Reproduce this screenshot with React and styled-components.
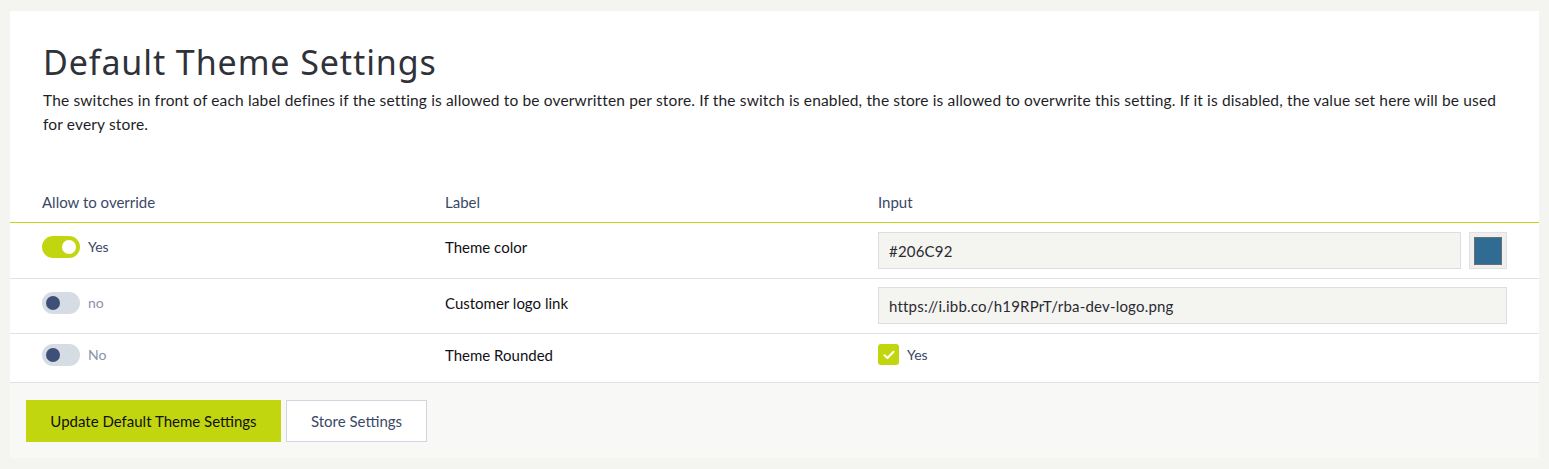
import React from "react";
import styled, { createGlobalStyle } from "styled-components";

const Global = createGlobalStyle`
  html, body { margin: 0; padding: 0; background: #f4f4f0; }
  body { font-family: "Lato", "Noto Sans", sans-serif; color: #1c1c24; }
  * { box-sizing: border-box; }
`;

const Page = styled.div`
  padding: 11px 10px 11px 10px;
`;

const Card = styled.div`
  background: #ffffff;
`;

const Intro = styled.div`
  padding: 31px 32px 56px 33px;
`;

const Title = styled.h1`
  margin: 0 0 6px 0;
  font-family: "Noto Sans", "Lato", sans-serif;
  font-weight: 400;
  font-size: 34px;
  line-height: 40px;
  color: #30323a;
  letter-spacing: 0.9px;
`;

const Desc = styled.p`
  margin: 0;
  font-size: 15.5px;
  line-height: 24px;
  letter-spacing: 0.15px;
  color: #1e1e28;
`;

const Grid = styled.div`
  display: grid;
  grid-template-columns: 435px 433px 1fr;
`;

const HeadCell = styled.div`
  padding: 0 0 10px ${(p) => p.$pl || 0}px;
  font-size: 15px;
  line-height: 20px;
  color: #3a4866;
  border-bottom: 1px solid #c3d512;
`;

const Cell = styled.div`
  display: flex;
  align-items: ${(p) => (p.$top ? "flex-start" : "center")};
  gap: 8px;
  padding: ${(p) => p.$pad || "9px 0"};
  padding-left: ${(p) => p.$pl || 0}px;
  padding-right: ${(p) => p.$pr || 0}px;
  min-height: ${(p) => p.$h || 55}px;
  border-bottom: ${(p) => (p.$last ? "none" : "1px solid #e0e2e8")};
  font-size: 15px;
  color: #111116;
`;

const CellText = styled.span`
  line-height: 20px;
  padding-top: 1px;
`;

const Track = styled.span`
  position: relative;
  display: inline-block;
  width: 38px;
  height: 22px;
  border-radius: 11px;
  background: ${(p) => (p.$on ? "#c2d60f" : "#d6dce4")};
  flex: none;
`;

const Knob = styled.span`
  position: absolute;
  top: 4px;
  left: ${(p) => (p.$on ? "20px" : "4px")};
  width: 14px;
  height: 14px;
  border-radius: 50%;
  background: ${(p) => (p.$on ? "#ffffff" : "#3e5078")};
`;

const SwitchText = styled.span`
  font-size: 14px;
  line-height: 22px;
  color: ${(p) => (p.$on ? "#3a4866" : "#8a93a8")};
`;

const TextInput = styled.div`
  flex: 1;
  height: 37px;
  display: flex;
  align-items: center;
  padding: 0 10px;
  background: #f4f4f0;
  border: 1px solid #dcdee4;
  font-size: 15px;
  letter-spacing: 0.2px;
  color: #2a2a33;
`;

const SwatchBox = styled.div`
  width: 38px;
  height: 37px;
  flex: none;
  background: #efefef;
  border: 1px solid #e0e0e2;
  display: flex;
  align-items: center;
  justify-content: center;
`;

const Swatch = styled.div`
  width: 28px;
  height: 28px;
  background: #2f6b92;
  border: 1px solid #6b6e70;
`;

const Check = styled.span`
  width: 21px;
  height: 21px;
  border-radius: 3px;
  background: #c2d60f;
  display: inline-flex;
  align-items: center;
  justify-content: center;
  flex: none;
`;

const CheckText = styled.span`
  font-size: 14px;
  line-height: 21px;
  color: #3a4866;
`;

const Footer = styled.div`
  display: flex;
  gap: 5px;
  padding: 17px 16px 16px 16px;
  background: #f8f8f6;
  border-top: 1px solid #e0e2e8;
`;

const Button = styled.button`
  height: 42px;
  padding: 0;
  white-space: nowrap;
  font-family: "Lato", "Noto Sans", sans-serif;
  font-size: 15px;
  cursor: pointer;
  background: ${(p) => (p.$primary ? "#c2d60f" : "#ffffff")};
  color: ${(p) => (p.$primary ? "#111111" : "#3a4866")};
  border: 1px solid ${(p) => (p.$primary ? "#c2d60f" : "#d0d6e0")};
  width: ${(p) => p.$w}px;
`;

const Toggle = ({ on, label }) => (
  <>
    <Track $on={on}>
      <Knob $on={on} />
    </Track>
    <SwitchText $on={on}>{label}</SwitchText>
  </>
);

export default function App() {
  return (
    <>
      <Global />
      <Page>
        <Card>
          <Intro>
            <Title>Default Theme Settings</Title>
            <Desc>
              The switches in front of each label defines if the setting is allowed to be overwritten per store. If the switch is enabled, the store is allowed to overwrite this setting. If it is disabled, the value set here will be used for every store.
            </Desc>
          </Intro>
          <Grid>
            <HeadCell $pl={32}>Allow to override</HeadCell>
            <HeadCell>Label</HeadCell>
            <HeadCell>Input</HeadCell>

            <Cell $pl={32} $top $pad="13px 0 0 0">
              <Toggle on label="Yes" />
            </Cell>
            <Cell $top $pad="13px 0 0 0">
              <CellText>Theme color</CellText>
            </Cell>
            <Cell $pr={32}>
              <TextInput>#206C92</TextInput>
              <SwatchBox>
                <Swatch />
              </SwatchBox>
            </Cell>

            <Cell $pl={32} $top $pad="13px 0 0 0">
              <Toggle label="no" />
            </Cell>
            <Cell $top $pad="13px 0 0 0">
              <CellText>Customer logo link</CellText>
            </Cell>
            <Cell $pr={32} $pad="8px 0 9px 0">
              <TextInput>https://i.ibb.co/h19RPrT/rba-dev-logo.png</TextInput>
            </Cell>

            <Cell $pl={32} $last $top $pad="10px 0 0 0" $h={48}>
              <Toggle label="No" />
            </Cell>
            <Cell $last $top $pad="10px 0 0 0" $h={48}>
              <CellText>Theme Rounded</CellText>
            </Cell>
            <Cell $last $top $pad="10px 0 0 0" $h={48}>
              <Check>
                <svg width="12" height="10" viewBox="0 0 12 10">
                  <path d="M1.5 5.2 L4.5 8 L10.5 1.8" fill="none" stroke="#fff" strokeWidth="2" strokeLinecap="round" strokeLinejoin="round" />
                </svg>
              </Check>
              <CheckText>Yes</CheckText>
            </Cell>
          </Grid>
          <Footer>
            <Button $primary $w={255}>Update Default Theme Settings</Button>
            <Button $w={141}>Store Settings</Button>
          </Footer>
        </Card>
      </Page>
    </>
  );
}
